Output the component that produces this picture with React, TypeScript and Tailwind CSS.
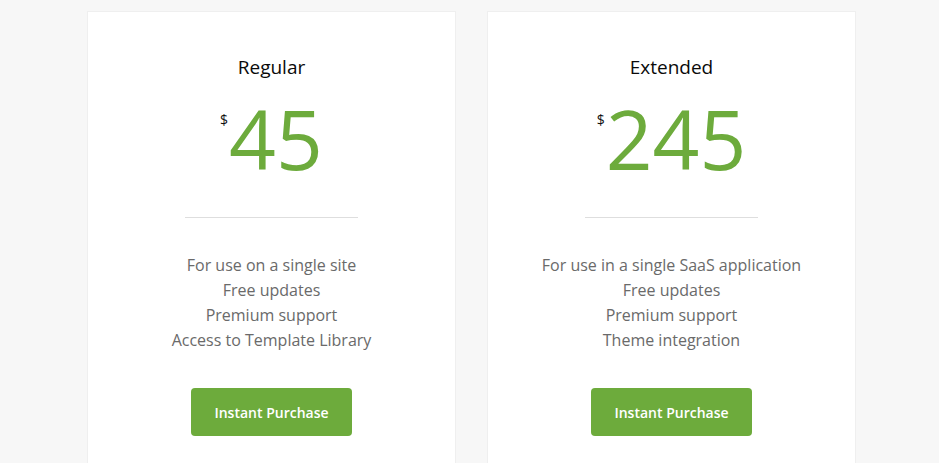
import React from "react";

interface PlanProps {
  name: string;
  price: number;
  features: string[];
}

const PlanCard: React.FC<PlanProps> = ({ name, price, features }) => {
  return (
    <div className="w-[369px] h-[470px] shrink-0 bg-white border border-[#efefef] flex flex-col items-center pt-[43px]">
      <h3 className="text-[19px] leading-6 font-medium text-[#0a0a0a]">{name}</h3>

      {/* price with small currency sign */}
      <div className="flex items-start mt-[18px]">
        <span className="text-[14px] leading-none text-[#111] mt-[16px] mr-[1px]">$</span>
        <span className="text-[82px] leading-none text-[#6dab3c]">{price}</span>
      </div>

      <div className="w-[173px] h-px bg-[#dedede] mt-[38px]" />

      <ul className="mt-[35px] text-center text-[16px] leading-[25px] text-[#6a6a6a]">
        {features.map((f) => (
          <li key={f}>{f}</li>
        ))}
      </ul>

      <button className="mt-[35px] w-[161px] h-[48px] rounded bg-[#6dab3c] text-white text-[14px] font-semibold">
        Instant Purchase
      </button>
    </div>
  );
};

export default function App() {
  return (
    <div
      className="min-h-[463px] h-[463px] overflow-hidden bg-[#f7f7f7] flex gap-[31px] pl-[87px] pt-[11px]"
      style={{ fontFamily: '"Open Sans", "Liberation Sans", sans-serif' }}
    >
      <PlanCard
        name="Regular"
        price={45}
        features={["For use on a single site", "Free updates", "Premium support", "Access to Template Library"]}
      />
      <PlanCard
        name="Extended"
        price={245}
        features={["For use in a single SaaS application", "Free updates", "Premium support", "Theme integration"]}
      />
    </div>
  );
}
